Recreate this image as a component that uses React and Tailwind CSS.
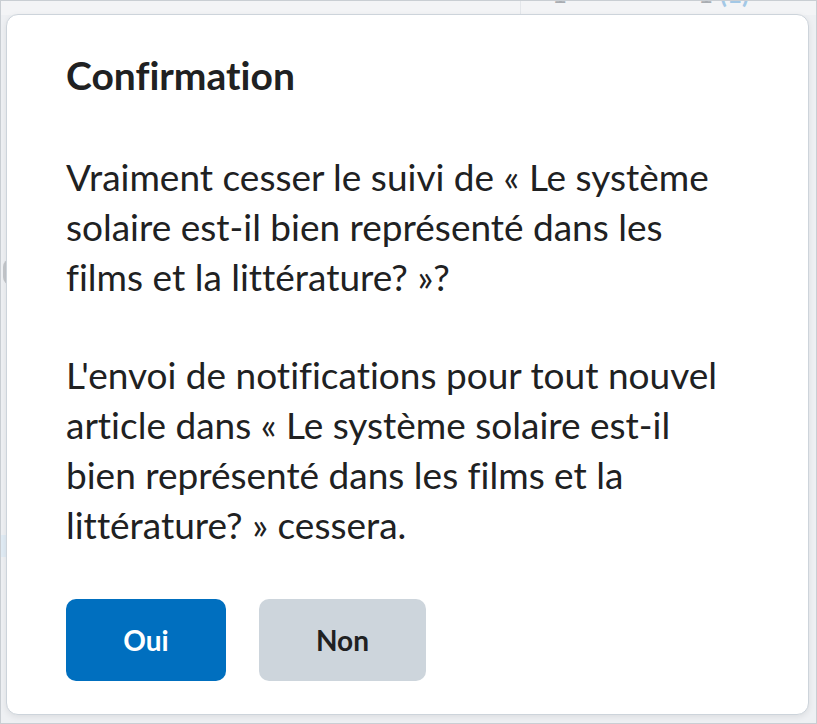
import React from 'react';

export default function App() {
  return (
    <div
      className="relative w-[817px] h-[724px] overflow-hidden border border-[#c9ced3] bg-[#eef0f3] pl-[5px] pt-[13px] [font-variant-ligatures:none]"
      style={{ fontFamily: 'Lato, "Noto Sans", sans-serif' }}
    >
      {/* faint page content behind the overlay */}
      <div className="absolute left-0 top-0 w-full h-[14px] bg-[#f3f4f6]" />
      <div className="absolute left-[519px] top-[-20px] w-px h-[40px] bg-[#e3e6ea]" />
      <span className="absolute left-[551px] top-[-22px] text-[26px] leading-[28px] text-[#a9adb2]">1</span>
      <span className="absolute left-[697px] top-[-22px] text-[26px] leading-[28px] text-[#a9adb2]">
        1 <span className="font-bold text-[#a3c8e6]">(1)</span>
      </span>
      <div className="absolute left-[2px] top-[258px] w-[8px] h-[26px] rounded-l-full bg-[#c4c7cb]" />
      <div className="absolute left-0 top-[534px] w-[5px] h-[22px] bg-[#e0ebf4]" />

      {/* dialog */}
      <div className="relative w-[803px] h-[701px] rounded-[12px] border border-[#cdd4db] bg-white shadow-[0_2px_6px_rgba(0,0,0,0.08)] px-[59px] pt-[37px]">
        <h1 className="text-[39px] leading-[46px] font-bold text-[#202122]">Confirmation</h1>
        <div className="mt-[54px] max-w-[664px] text-[37px] leading-[50px] text-[#202122]">
          <p>Vraiment cesser le suivi de « Le système solaire est-il bien représenté dans les films et la littérature? »?</p>
          <p className="mt-[48px]">
            L'envoi de notifications pour tout nouvel article dans « Le système solaire est-il bien représenté dans les films et la littérature? » cessera.
          </p>
        </div>
        <div className="mt-[49px] flex gap-[33px]">
          <button className="w-[160px] h-[82px] rounded-[10px] bg-[#006fbf] text-white text-[28px] font-bold">
            Oui
          </button>
          <button className="w-[167px] h-[82px] rounded-[10px] bg-[#cdd5dc] text-[#202122] text-[28px] font-bold">
            Non
          </button>
        </div>
      </div>
    </div>
  );
}
